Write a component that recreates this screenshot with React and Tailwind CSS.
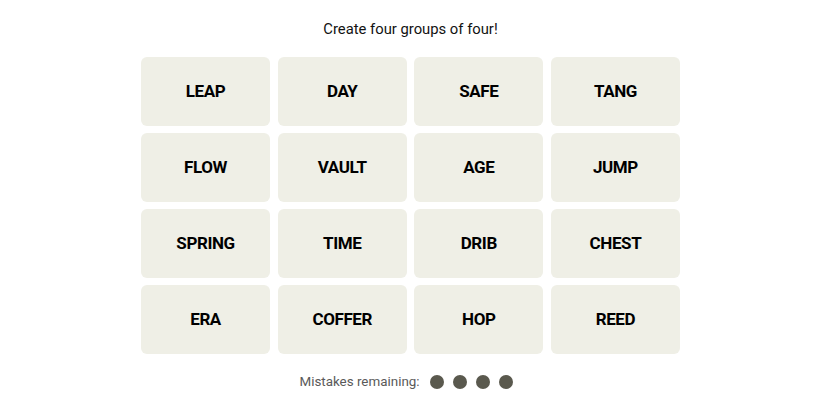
const words = [
  "LEAP","DAY","SAFE","TANG",
  "FLOW","VAULT","AGE","JUMP",
  "SPRING","TIME","DRIB","CHEST",
  "ERA","COFFER","HOP","REED",
];

export default function App() {
  return (
    <div className="w-[825px] h-[413px] bg-white">
      <div className="w-[821px] flex flex-col items-center" style={{fontFamily: "Roboto, 'Liberation Sans', sans-serif"}}>
        <div className="mt-[19px] h-[20px] leading-[20px] text-[14.8px] text-[#121212]">Create four groups of four!</div>
        <div className="mt-[18px] w-[539px] grid grid-cols-4 gap-x-[7.5px] gap-y-[7px]">
          {words.map((w) => (
            <div key={w} className="h-[69px] rounded-[6px] bg-[#efefe6] flex items-center justify-center text-[17px] font-bold text-black tracking-[-0.4px]">
              {w}
            </div>
          ))}
        </div>
        <div className="mt-[18px] mr-[9px] flex items-center text-[13.4px] text-[#5a5a5a]">
          <span>Mistakes remaining:</span>
          <div className="ml-[10px] flex gap-[9px]">
            <span className="w-[14px] h-[14px] rounded-full bg-[#5a594e]"></span>
            <span className="w-[14px] h-[14px] rounded-full bg-[#5a594e]"></span>
            <span className="w-[14px] h-[14px] rounded-full bg-[#5a594e]"></span>
            <span className="w-[14px] h-[14px] rounded-full bg-[#5a594e]"></span>
          </div>
        </div>
      </div>
    </div>
  );
}
